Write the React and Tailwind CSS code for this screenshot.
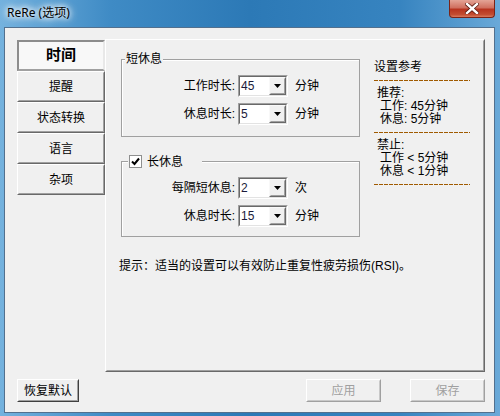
import React from "react";

function ArrowButton() {
    return (
        <div className="w-[17px] h-full border border-t-[#f8f8f8] border-l-[#f8f8f8] border-r-[#696969] border-b-[#696969] bg-[#f0f0f0]">
            <div className="h-full border border-t-[#f0f0f0] border-l-[#f0f0f0] border-r-[#a0a0a0] border-b-[#a0a0a0] flex items-center justify-center">
                <svg width="7" height="4" viewBox="0 0 7 4">
                    <path d="M0 0H7L3.5 4Z" fill="#000" />
                </svg>
            </div>
        </div>
    );
}

function Combo({ value }) {
    return (
        <div className="w-[50px] h-[22px] border border-t-[#a0a0a0] border-l-[#a0a0a0] border-r-white border-b-white">
            <div className="h-full border border-t-[#696969] border-l-[#696969] border-r-[#e3e3e3] border-b-[#e3e3e3] bg-white flex items-center">
                <span className="flex-1 pl-[1px] text-[12px] leading-none text-[#1a1a3a]">{value}</span>
                <ArrowButton />
            </div>
        </div>
    );
}

function Row({ label, value, unit }) {
    return (
        <div className="flex items-center h-[22px]">
            <span className="w-[113px] text-right text-[12px]">{label}</span>
            <div className="ml-[3px]">
                <Combo value={value} />
            </div>
            <span className="ml-[7px] text-[12px]">{unit}</span>
        </div>
    );
}

function Tab({ label, active }) {
    if (active) {
        return (
            <div className="h-[31px] border-2 border-t-[#8c8c8c] border-l-[#8c8c8c] border-r-[#e8e8e8] border-b-[#a0a0a0] bg-[#f8f8f8] flex items-center justify-center text-[15px] font-bold">
                {label}
            </div>
        );
    }
    return (
        <div className="h-[31px] border border-t-white border-l-white border-r-[#696969] border-b-[#696969]">
            <div className="h-full border border-t-[#f0f0f0] border-l-[#f0f0f0] border-r-[#a0a0a0] border-b-[#a0a0a0] flex items-center justify-center text-[12px]">
                {label}
            </div>
        </div>
    );
}

function Button({ label, width, disabled }) {
    return (
        <div
            className={`h-[23px] border ${width} ${
                disabled
                    ? "border-t-white border-l-white border-r-[#a0a0a0] border-b-[#a0a0a0]"
                    : "border-t-white border-l-white border-r-[#404040] border-b-[#404040]"
            }`}
        >
            <div
                className={`h-full border border-t-[#f0f0f0] border-l-[#f0f0f0] flex items-center justify-center text-[12px] ${
                    disabled
                        ? "border-r-[#c8c8c8] border-b-[#c8c8c8] text-[#a0a0a0]"
                        : "border-r-[#a0a0a0] border-b-[#a0a0a0] text-black"
                }`}
            >
                {label}
            </div>
        </div>
    );
}

function Dashed() {
    return <div className="h-[1px] w-[96px] bg-[repeating-linear-gradient(90deg,#a05a00_0_4px,transparent_4px_5px)]" />;
}

export default function App() {
    return (
        <div className="w-[500px] h-[416px] overflow-hidden flex flex-col bg-[linear-gradient(90deg,#74b2de_0%,#3f8bc5_22%,#2c79b6_50%,#3784c0_80%,#6aa9d8_100%)] font-['Liberation_Sans','Noto_Sans_CJK_SC',sans-serif] text-black">
            <div className="h-[27px] relative shrink-0">
                <span className="absolute left-[7px] top-[5px] text-[12px] leading-[16px] font-['Noto_Sans','Noto_Sans_CJK_SC',sans-serif] [text-shadow:0_0_5px_#fff,0_0_8px_#fff,0_0_10px_#fff]">
                    ReRe (选项)
                </span>
                <div className="absolute left-[449px] top-0 w-[46px] h-[18px] rounded-b-[4px] border border-t-0 border-[#7a2418] bg-[linear-gradient(180deg,#e4a496_0%,#d0705f_45%,#b8341f_55%,#c24c30_85%,#d97a5e_100%)] flex items-center justify-center">
                    <svg width="14" height="11" viewBox="0 0 14 11">
                        <path d="M2 1L12 10M12 1L2 10" stroke="#5a1a10" strokeWidth="4" strokeLinecap="square" />
                        <path d="M2 1L12 10M12 1L2 10" stroke="#fff" strokeWidth="2.4" strokeLinecap="square" />
                    </svg>
                </div>
            </div>

            <div className="ml-[4px] w-[491px] h-[386px] border border-[#52708e] bg-[#f0f0f0] flex flex-col pl-[12px] pr-[9px] pt-[11px]">
                <div className="flex h-[333px]">
                    <div className="w-[88px] flex flex-col pt-[1px]">
                        <Tab label="时间" active />
                        <Tab label="提醒" />
                        <Tab label="状态转换" />
                        <Tab label="语言" />
                        <Tab label="杂项" />
                    </div>
                    <div className="flex-1 border border-t-white border-l-white border-r-[#696969] border-b-[#696969]">
                        <div className="h-full border border-t-[#f0f0f0] border-l-[#f0f0f0] border-r-[#a0a0a0] border-b-[#a0a0a0] pl-[12px] pt-[18px]">
                            <div className="flex">
                                <div className="ml-[2px] flex flex-col">
                                    <div className="relative w-[239px] h-[78px] border border-[#a0a0a0] shadow-[inset_1px_1px_0_#fff] pt-[15px] flex flex-col gap-[6px]">
                                        <span className="absolute left-[3px] top-[-9px] px-[1px] bg-[#f0f0f0] text-[12px] leading-[16px]">
                                            短休息
                                        </span>
                                        <Row label="工作时长:" value="45" unit="分钟" />
                                        <Row label="休息时长:" value="5" unit="分钟" />
                                    </div>
                                    <div className="relative mt-[24px] w-[239px] h-[76px] border border-[#a0a0a0] shadow-[inset_1px_1px_0_#fff] pt-[15px] flex flex-col gap-[6px]">
                                        <div className="absolute left-[6px] top-[-9px] pl-[1px] pr-[19px] bg-[#f0f0f0] flex items-center gap-[5px] h-[17px]">
                                            <div className="w-[13px] h-[13px] border border-[#8e8f8f] bg-white flex items-center justify-center">
                                                <svg width="9" height="9" viewBox="0 0 9 9">
                                                    <path d="M1 4.5L3.5 7L8 1.5" stroke="#000" strokeWidth="2" fill="none" />
                                                </svg>
                                            </div>
                                            <span className="text-[12px] leading-[16px]">长休息</span>
                                        </div>
                                        <Row label="每隔短休息:" value="2" unit="次" />
                                        <Row label="休息时长:" value="15" unit="分钟" />
                                    </div>
                                </div>
                                <div className="ml-[14px] pt-[1px] flex flex-col text-[12px] leading-[13px]">
                                    <span className="leading-[14px]">设置参考</span>
                                    <div className="mt-[6px]">
                                        <Dashed />
                                    </div>
                                    <div className="mt-[6px] pl-[3px] flex flex-col">
                                        <span>推荐:</span>
                                        <span className="pl-[3px]">工作: 45分钟</span>
                                        <span className="pl-[3px]">休息: 5分钟</span>
                                    </div>
                                    <div className="mt-[6px]">
                                        <Dashed />
                                    </div>
                                    <div className="mt-[6px] pl-[3px] flex flex-col">
                                        <span>禁止:</span>
                                        <span className="pl-[3px]">工作 &lt; 5分钟</span>
                                        <span className="pl-[3px]">休息 &lt; 1分钟</span>
                                    </div>
                                    <div className="mt-[6px]">
                                        <Dashed />
                                    </div>
                                </div>
                            </div>
                            <div className="mt-[21px] text-[12px] leading-[16px]">
                                提示：适当的设置可以有效防止重复性疲劳损伤(RSI)。
                            </div>
                        </div>
                    </div>
                </div>
                <div className="flex mt-[7px]">
                    <Button label="恢复默认" width="w-[62px]" />
                    <div className="flex-1" />
                    <Button label="应用" width="w-[75px]" disabled />
                    <div className="w-[29px]" />
                    <Button label="保存" width="w-[75px]" disabled />
                </div>
            </div>
        </div>
    );
}
